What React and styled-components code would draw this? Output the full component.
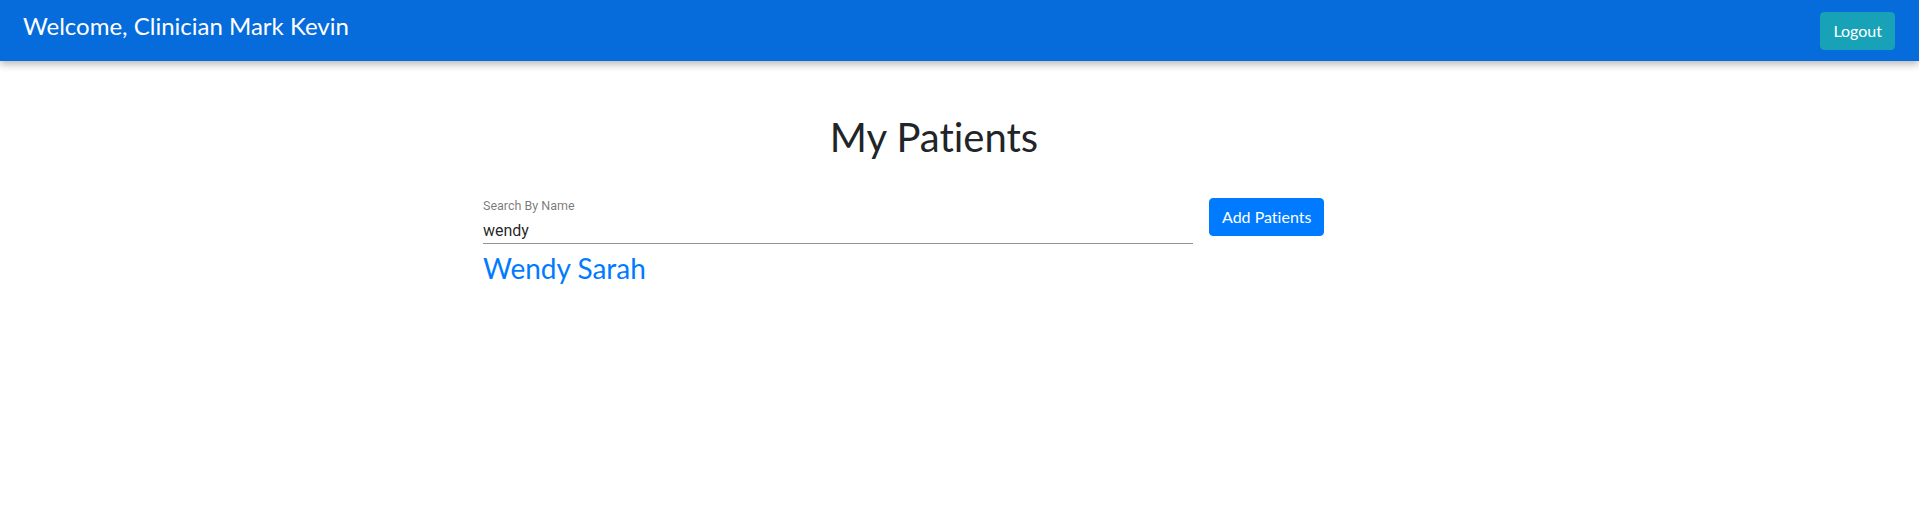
import React, { useState } from 'react';
import styled, { createGlobalStyle } from 'styled-components';

const GlobalStyle = createGlobalStyle`
  body {
    margin: 0;
    background: #fff;
    font-family: Lato, "Open Sans", sans-serif;
    font-variant-ligatures: none;
    color: #212529;
  }
`;

const Header = styled.header`
  height: 61px;
  display: flex;
  align-items: center;
  justify-content: space-between;
  padding: 0 24px 0 23px;
  background: #066cdc;
  box-shadow: 0 3px 8px rgba(0, 0, 0, 0.3);
  position: relative;
  z-index: 1;
`;

const Brand = styled.div`
  color: #fff;
  font-size: 24px;
  line-height: 1.2;
  margin-bottom: 8px;
`;

const Button = styled.button`
  font-family: Lato, "Open Sans", sans-serif;
  font-variant-ligatures: none;
  font-size: 16px;
  line-height: 24px;
  padding: 6px 12px;
  color: #fff;
  background: ${props => props.color || '#007bff'};
  border: 1px solid ${props => props.color || '#007bff'};
  border-radius: 4px;
  cursor: pointer;
  white-space: nowrap;
`;

const Main = styled.main`
  width: 902px;
  margin-left: 483px;
  padding-top: 52px;
`;

const Title = styled.h1`
  margin: 0 0 37px;
  text-align: center;
  font-size: 40px;
  font-weight: 400;
  line-height: 48px;
`;

const SearchRow = styled.div`
  display: flex;
  align-items: flex-start;
  gap: 16px;
`;

const Field = styled.label`
  width: 710px;
  display: flex;
  flex-direction: column;
  padding-top: 2px;
`;

const FieldLabel = styled.span`
  font-family: Roboto, sans-serif;
  font-size: 12.5px;
  line-height: 12px;
  color: rgba(0, 0, 0, 0.54);
`;

const Input = styled.input`
  font-family: Roboto, sans-serif;
  font-size: 16px;
  line-height: 19px;
  height: 19px;
  padding: 9px 0 3px;
  border: 0;
  border-bottom: 1px solid rgba(0, 0, 0, 0.42);
  outline: none;
  color: rgba(0, 0, 0, 0.87);
  background: none;
`;

const Results = styled.div`
  padding-top: 8px;
`;

const PatientLink = styled.a`
  display: block;
  font-size: 28px;
  line-height: 1.2;
  color: #007bff;
  text-decoration: none;
`;

const patients = ['Wendy Sarah', 'John Smith', 'Alice Wong'];

const App = () => {
  const [query, setQuery] = useState('wendy');
  const found = patients.filter(p => p.toLowerCase().includes(query.toLowerCase()));

  return (
    <>
      <GlobalStyle />
      <Header>
        <Brand>Welcome, Clinician Mark Kevin</Brand>
        <Button color="#17a2b8">Logout</Button>
      </Header>
      <Main>
        <Title>My Patients</Title>
        <SearchRow>
          <Field>
            <FieldLabel>Search By Name</FieldLabel>
            <Input value={query} onChange={e => setQuery(e.target.value)} />
          </Field>
          <Button>Add Patients</Button>
        </SearchRow>
        <Results>
          {found.map(p => (
            <PatientLink href="#" key={p}>{p}</PatientLink>
          ))}
        </Results>
      </Main>
    </>
  );
};

export default App;
